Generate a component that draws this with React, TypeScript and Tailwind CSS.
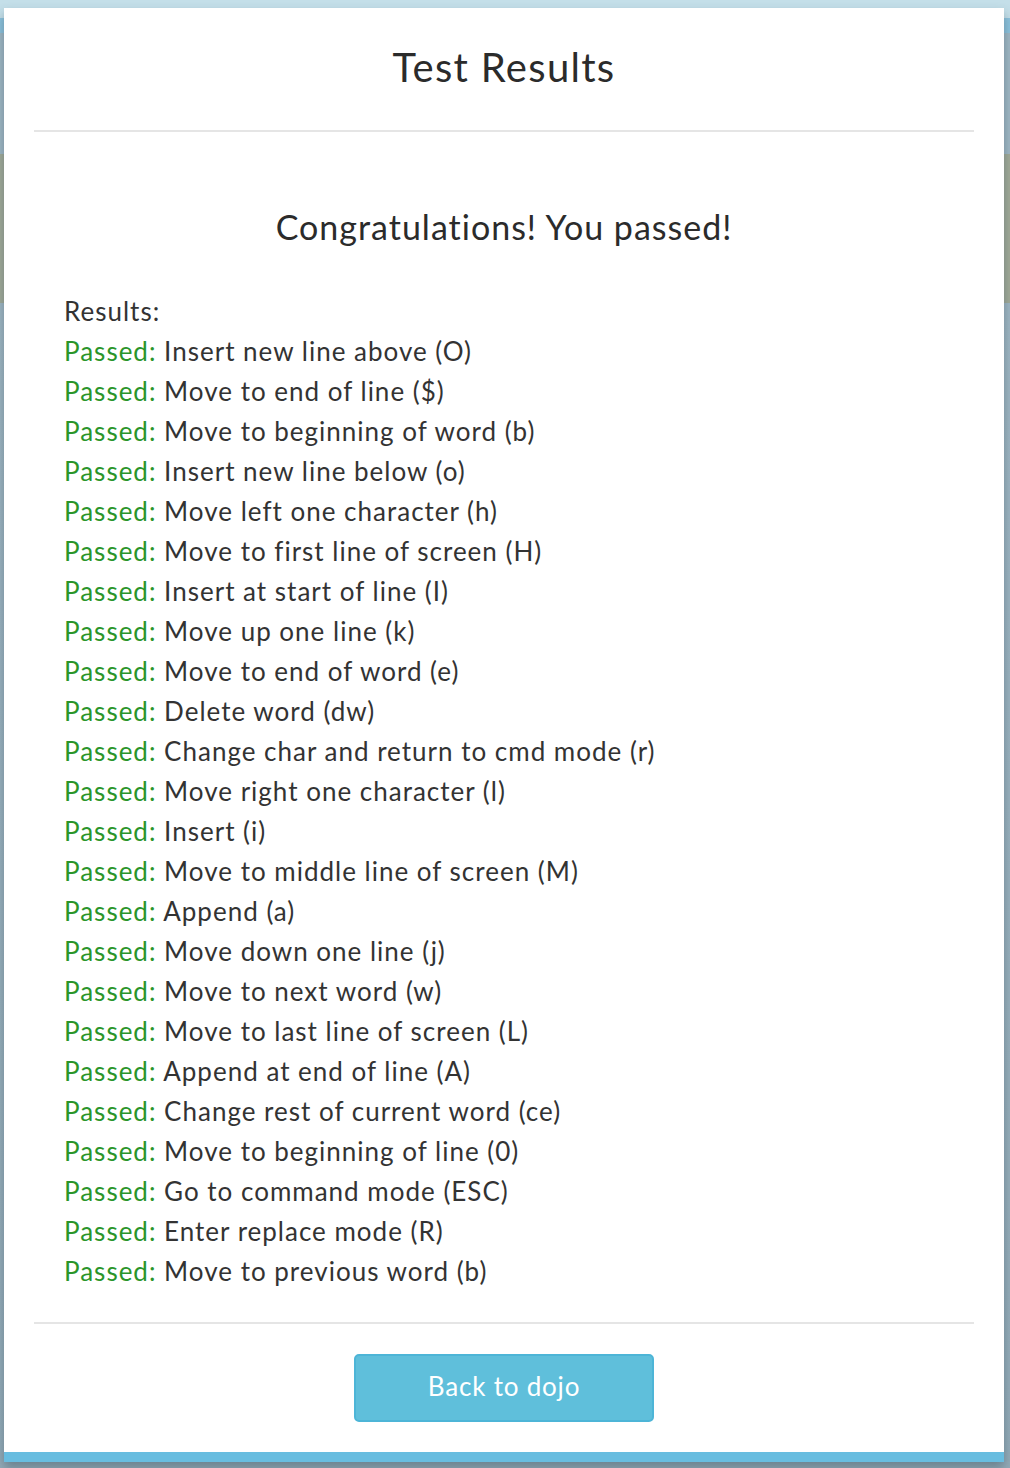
import React from 'react';

const results: string[] = [
  'Insert new line above (O)',
  'Move to end of line ($)',
  'Move to beginning of word (b)',
  'Insert new line below (o)',
  'Move left one character (h)',
  'Move to first line of screen (H)',
  'Insert at start of line (I)',
  'Move up one line (k)',
  'Move to end of word (e)',
  'Delete word (dw)',
  'Change char and return to cmd mode (r)',
  'Move right one character (l)',
  'Insert (i)',
  'Move to middle line of screen (M)',
  'Append (a)',
  'Move down one line (j)',
  'Move to next word (w)',
  'Move to last line of screen (L)',
  'Append at end of line (A)',
  'Change rest of current word (ce)',
  'Move to beginning of line (0)',
  'Go to command mode (ESC)',
  'Enter replace mode (R)',
  'Move to previous word (b)',
];

const App: React.FC = () => {
  return (
    <div className="w-[1010px] h-[1468px] overflow-hidden bg-[linear-gradient(180deg,#c4dfe9_0px,#c4dfe9_18px,#8cc3de_18px,#8cc3de_33px,#a0b8c5_33px,#a0b8c5_154px,#a2ab98_154px,#a2ab98_303px,#9fb7c4_303px,#93abb8_100%)] pt-[8px] pl-[4px] font-['Lato','Liberation_Sans',sans-serif]">
      <div className="w-[1000px] bg-white border-b-[10px] border-[#68bde0] shadow-[0_6px_10px_rgba(60,80,90,0.45)]">
        <div className="h-[122px] pb-[4px] flex items-center justify-center">
          <h1 className="text-[40px] leading-none text-[#2b2b2b] tracking-[1.3px]">Test Results</h1>
        </div>
        <div className="mx-[30px] h-[2px] bg-[#e5e5e5]" />

        <div className="pt-[75px] pb-[31px] px-[60px]">
          <h2 className="text-center text-[34px] leading-[40px] text-[#2b2b2b] tracking-[1px]">Congratulations! You passed!</h2>
          <div className="mt-[44px] text-[26px] leading-[40px] text-[#333333] tracking-[1px]">
            <p>Results:</p>
            {results.map((r, i) => (
              <p key={i} className="whitespace-nowrap">
                <span className="text-[#2a952a]">Passed:</span> {r}
              </p>
            ))}
          </div>
        </div>

        <div className="mx-[30px] h-[2px] bg-[#e5e5e5]" />
        <div className="py-[30px] flex justify-center">
          <button className="w-[300px] h-[68px] pb-[3px] rounded-[5px] bg-[#5fbfdb] border-2 border-[#4db5d7] text-white text-[26px] tracking-[0.8px]">
            Back to dojo
          </button>
        </div>
      </div>
    </div>
  );
};

export default App;
